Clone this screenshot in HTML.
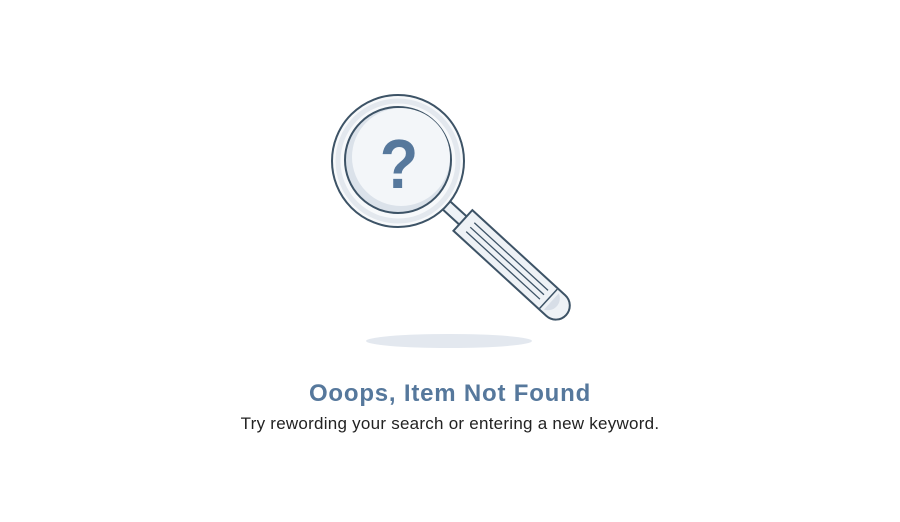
<!DOCTYPE html>
<html><head><style>
body{margin:0;width:900px;height:522px;background:#fff;font-family:"Liberation Sans",sans-serif;position:relative;overflow:hidden}
h1{position:absolute;top:380px;left:0;width:900px;text-align:center;margin:0;font-size:24px;letter-spacing:0.8px;font-weight:bold;color:#56789c}
p{position:absolute;top:414px;left:0;width:900px;text-align:center;margin:0;font-size:17px;letter-spacing:0.25px;color:#222}
svg{position:absolute;left:0;top:0}
</style></head><body>
<svg width="900" height="522">
<ellipse cx="449" cy="341" rx="83" ry="7" fill="#e3e8ef"/>
<g transform="translate(398,161) rotate(42.5)">
<rect x="64" y="-5.5" width="28" height="11" fill="#eef2f6" stroke="#3d5366" stroke-width="2"/>
<path d="M88 -14 H214 A14 14 0 0 1 214 14 H88 Z" fill="#eef2f6" stroke="#3d5366" stroke-width="2"/>
<path d="M204 -13 V13" stroke="#3d5366" stroke-width="1.5"/>
<path d="M208 -11 A12 12 0 0 1 208 11" fill="#d7dee7" stroke="none"/>
<path d="M98 -6 H198 M98 0 H198 M98 6 H198" stroke="#3d5366" stroke-width="1.3"/>
</g>
<circle cx="398" cy="161" r="66" fill="#f7f9fb" stroke="#3d5366" stroke-width="2"/>
<circle cx="398" cy="161" r="60" fill="none" stroke="#e3e8ee" stroke-width="5"/>
<circle cx="398" cy="160" r="53" fill="#dbe2ea" stroke="#3d5366" stroke-width="2"/>
<circle cx="401" cy="157" r="49" fill="#f3f6f9"/>
<text x="399" y="188" text-anchor="middle" font-family="Liberation Sans" font-weight="bold" font-size="70" fill="#56789c" transform="translate(399,160) scale(0.9,1) translate(-399,-160)">?</text>
</svg>
<h1>Ooops, Item Not Found</h1>
<p>Try rewording your search or entering a new keyword.</p>
</body></html>
